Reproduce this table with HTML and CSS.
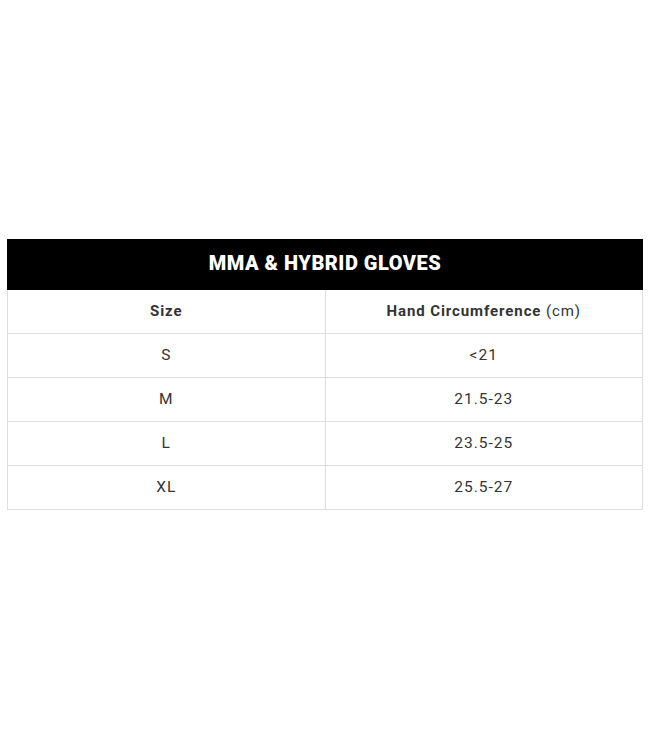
FILE: index.html
```html
<!DOCTYPE html>
<html>
<head>
<meta charset="utf-8">
<link rel="stylesheet" href="styles.css">
</head>
<body>
<div class="page">
  <table class="chart">
    <thead>
      <tr><th class="title" colspan="2">MMA &amp; HYBRID GLOVES</th></tr>
      <tr>
        <th class="head">Size</th>
        <th class="head">Hand Circumference <span class="unit">(cm)</span></th>
      </tr>
    </thead>
    <tbody>
      <tr><td>S</td><td>&lt;21</td></tr>
      <tr><td>M</td><td>21.5-23</td></tr>
      <tr><td>L</td><td>23.5-25</td></tr>
      <tr><td>XL</td><td>25.5-27</td></tr>
    </tbody>
  </table>
</div>
</body>
</html>
```
FILE: styles.css
```css
html, body {
  margin: 0;
  padding: 0;
  background: #fff;
}
.page {
  padding: 239px 7px 0 7px;
  width: 636px;
}
.chart {
  width: 636px;
  border-collapse: collapse;
  table-layout: fixed;
  font-family: Roboto, "Liberation Sans", sans-serif;
  color: #333;
}
.chart .title {
  background: #000;
  color: #fff;
  height: 46px;
  padding: 0 0 3px 0;
  font-size: 20px;
  font-weight: 900;
  letter-spacing: 0.5px;
  border: 1px solid #000;
  text-align: center;
}
.chart .head {
  height: 42px;
  padding: 0 0 1px 0;
  font-size: 15px;
  font-weight: 700;
  letter-spacing: 0.9px;
  color: #333;
  border: 1px solid #ddd;
  text-align: center;
}
.chart .unit {
  font-weight: 400;
}
.chart td {
  height: 42px;
  padding: 0 0 1px 0;
  font-size: 15.5px;
  font-weight: 400;
  letter-spacing: 1px;
  border: 1px solid #ddd;
  text-align: center;
}
```
